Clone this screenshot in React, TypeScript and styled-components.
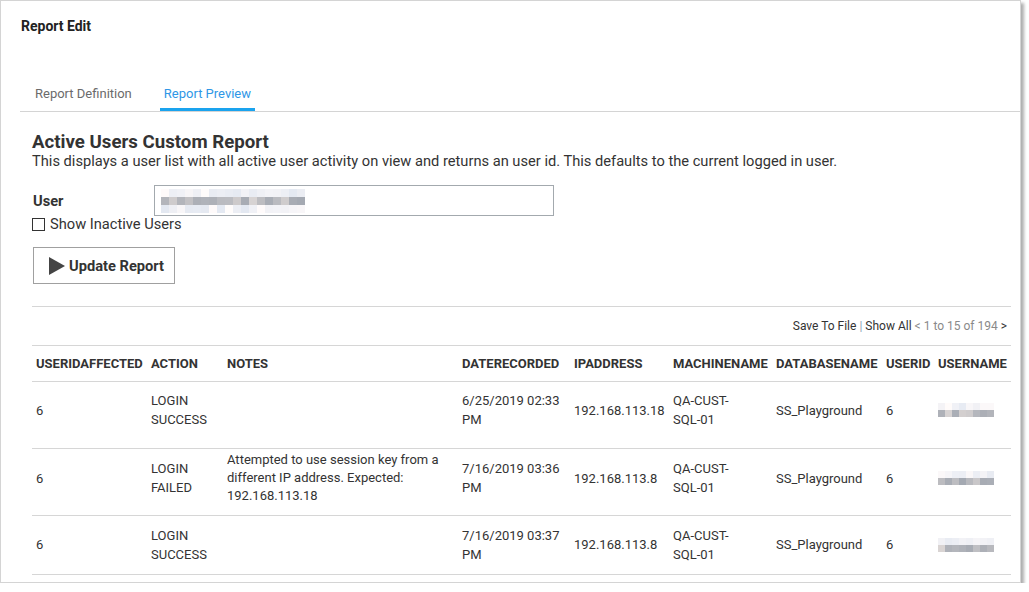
import styled, { createGlobalStyle } from "styled-components";

const GlobalStyle = createGlobalStyle`
  html, body {
    margin: 0;
    padding: 0;
    background: #ffffff;
  }
  body {
    font-family: Roboto, "Liberation Sans", Arial, sans-serif;
    color: #333333;
  }
`;

const Panel = styled.div`
  box-sizing: border-box;
  width: 1021px;
  height: 583px;
  border: 1px solid #d4d4d4;
  box-shadow: 3px 3px 3px rgba(0, 0, 0, 0.32);
  background: #ffffff;
  overflow: hidden;
`;

const PageTitle = styled.h1`
  margin: 0;
  padding: 17px 0 0 20px;
  height: 61px;
  box-sizing: border-box;
  font-size: 14px;
  line-height: 17px;
  font-weight: 700;
  color: #222222;
`;

const TabBar = styled.div`
  margin-left: 19px;
  padding-left: 11px;
  display: flex;
  gap: 24px;
  height: 50px;
  align-items: flex-end;
  border-bottom: 1px solid #d4d4d4;
  box-sizing: border-box;
`;

const Tab = styled.div<{ $active?: boolean }>`
  padding: 0 4px 6px;
  font-size: 13px;
  line-height: 17px;
  color: ${(p) => (p.$active ? "#2f97e6" : "#6b6b6b")};
  border-bottom: 3px solid ${(p) => (p.$active ? "#1aa3ee" : "transparent")};
`;

const Content = styled.div`
  padding: 20px 8px 0 31px;
`;

const ReportTitle = styled.h2`
  margin: 0;
  font-size: 18.67px;
  line-height: 21px;
  font-weight: 700;
  color: #333333;
`;

const Description = styled.p`
  margin: 0;
  font-size: 14.67px;
  line-height: 16px;
  color: #333333;
`;

const FieldRow = styled.div`
  display: flex;
  align-items: center;
  margin-top: 16px;
`;

const FieldLabel = styled.label`
  width: 121px;
  padding-left: 1px;
  font-size: 14.67px;
  font-weight: 700;
  color: #333333;
`;

const TextBox = styled.div`
  box-sizing: border-box;
  width: 400px;
  height: 31px;
  border: 1px solid #a3a9ae;
  padding: 2px 6px;
  display: flex;
  align-items: center;
`;

const Mosaic = styled.div<{ $cols: number; $size: number }>`
  display: grid;
  grid-template-columns: repeat(${(p) => p.$cols}, ${(p) => p.$size}px);
  grid-auto-rows: ${(p) => p.$size}px;
`;

const CheckRow = styled.label`
  display: flex;
  align-items: center;
  gap: 5px;
  font-size: 14.67px;
  line-height: 17px;
  color: #333333;
`;

const CheckBox = styled.span`
  box-sizing: border-box;
  width: 13px;
  height: 13px;
  border: 1px solid #333333;
  background: #ffffff;
`;

const UpdateButton = styled.button`
  margin-top: 14px;
  margin-left: 1px;
  box-sizing: border-box;
  width: 142px;
  height: 37px;
  border: 1px solid #a0a0a0;
  background: #ffffff;
  display: flex;
  align-items: center;
  gap: 4px;
  padding: 0 0 0 15px;
  font-family: inherit;
  font-size: 14.67px;
  font-weight: 700;
  color: #333333;
`;

const Divider = styled.div`
  margin-top: 22px;
  width: 979px;
  height: 40px;
  border-top: 1px solid #d6d6d6;
  border-bottom: 1px solid #d6d6d6;
  box-sizing: border-box;
  display: flex;
  align-items: center;
  justify-content: flex-end;
  padding-right: 4px;
  font-size: 12px;
  color: #333333;
`;

const Sep = styled.span`
  color: #8fa4b8;
  margin: 0 3px;
`;

const Muted = styled.span`
  color: #8a8a8a;
  margin-left: 3px;
`;

const Arrow = styled.span`
  margin-left: 3px;
  color: #333333;
`;

const Table = styled.table`
  width: 979px;
  border-collapse: collapse;
  table-layout: fixed;
  font-size: 13px;
  line-height: 19px;
  color: #333333;
`;

const HeadCell = styled.th`
  height: 35px;
  padding: 0 4px;
  text-align: left;
  font-weight: 700;
  border-bottom: 1px solid #d6d6d6;
  white-space: nowrap;
  box-sizing: border-box;
`;

const Row = styled.tr<{ $h: number; $pb: number }>`
  height: ${(p) => p.$h}px;
  td {
    padding-bottom: ${(p) => p.$pb}px;
  }
`;

const Cell = styled.td`
  padding: 0 4px;
  vertical-align: middle;
  border-bottom: 1px solid #d6d6d6;
  box-sizing: border-box;
`;

const NoteCell = styled(Cell)`
  line-height: 18px;
`;

function shade(seed: number) {
  const x = Math.sin(seed * 12.9898) * 43758.5453;
  return x - Math.floor(x);
}

function Pixelated({
  cols,
  rows,
  size,
  seed,
}: {
  cols: number;
  rows: number;
  size: number;
  seed: number;
}) {
  const cells = [];
  for (let r = 0; r < rows; r++) {
    for (let c = 0; c < cols; c++) {
      const middle = r === Math.floor(rows / 2);
      const f = shade(seed + r * 31 + c * 7);
      const base = middle ? 168 + Math.round(f * 45) : 232 + Math.round(f * 20);
      const tint = Math.round((f - 0.5) * 10);
      cells.push(
        <span
          key={r + "-" + c}
          style={{
            background: `rgb(${base + tint}, ${base}, ${base - tint + 4})`,
          }}
        />
      );
    }
  }
  return (
    <Mosaic $cols={cols} $size={size}>
      {cells}
    </Mosaic>
  );
}

const columns = [
  { key: "USERIDAFFECTED", w: 115 },
  { key: "ACTION", w: 76 },
  { key: "NOTES", w: 235 },
  { key: "DATERECORDED", w: 112 },
  { key: "IPADDRESS", w: 99 },
  { key: "MACHINENAME", w: 103 },
  { key: "DATABASENAME", w: 110 },
  { key: "USERID", w: 52 },
  { key: "USERNAME", w: 77 },
];

const rows = [
  {
    action: ["LOGIN", "SUCCESS"],
    notes: "",
    date: ["6/25/2019 02:33", "PM"],
    ip: "192.168.113.18",
    h: 67,
    pb: 9,
    seed: 3,
  },
  {
    action: ["LOGIN", "FAILED"],
    notes: "Attempted to use session key from a different IP address. Expected: 192.168.113.18",
    date: ["7/16/2019 03:36", "PM"],
    ip: "192.168.113.8",
    h: 67,
    pb: 7,
    seed: 11,
  },
  {
    action: ["LOGIN", "SUCCESS"],
    notes: "",
    date: ["7/16/2019 03:37", "PM"],
    ip: "192.168.113.8",
    h: 59,
    pb: 0,
    seed: 5,
  },
];

function PlayIcon() {
  return (
    <svg width="16" height="18" viewBox="0 0 16 18">
      <polygon points="0,0 16,9 0,18" fill="#444444" />
    </svg>
  );
}

export default function App() {
  return (
    <>
      <GlobalStyle />
      <Panel>
        <PageTitle>Report Edit</PageTitle>
        <TabBar>
          <Tab>Report Definition</Tab>
          <Tab $active>Report Preview</Tab>
        </TabBar>
        <Content>
          <ReportTitle>Active Users Custom Report</ReportTitle>
          <Description>
            This displays a user list with all active user activity on view and
            returns an user id. This defaults to the current logged in user.
          </Description>
          <FieldRow>
            <FieldLabel>User</FieldLabel>
            <TextBox>
              <Pixelated cols={18} rows={3} size={8} seed={1} />
            </TextBox>
          </FieldRow>
          <CheckRow>
            <CheckBox />
            Show Inactive Users
          </CheckRow>
          <UpdateButton>
            <PlayIcon />
            Update Report
          </UpdateButton>
          <Divider>
            Save To File<Sep>|</Sep>Show All
            <Muted>&lt; 1 to 15 of 194</Muted>
            <Arrow>&gt;</Arrow>
          </Divider>
          <Table>
            <colgroup>
              {columns.map((c) => (
                <col key={c.key} style={{ width: c.w }} />
              ))}
            </colgroup>
            <thead>
              <tr>
                {columns.map((c) => (
                  <HeadCell key={c.key}>{c.key}</HeadCell>
                ))}
              </tr>
            </thead>
            <tbody>
              {rows.map((r, i) => (
                <Row key={i} $h={r.h} $pb={r.pb}>
                  <Cell>6</Cell>
                  <Cell>
                    {r.action[0]}
                    <br />
                    {r.action[1]}
                  </Cell>
                  <NoteCell>{r.notes}</NoteCell>
                  <Cell>
                    {r.date[0]}
                    <br />
                    {r.date[1]}
                  </Cell>
                  <Cell>{r.ip}</Cell>
                  <Cell>
                    QA-CUST-
                    <br />
                    SQL-01
                  </Cell>
                  <Cell>SS_Playground</Cell>
                  <Cell>6</Cell>
                  <Cell>
                    <Pixelated cols={8} rows={2} size={7} seed={r.seed} />
                  </Cell>
                </Row>
              ))}
            </tbody>
          </Table>
        </Content>
      </Panel>
    </>
  );
}
